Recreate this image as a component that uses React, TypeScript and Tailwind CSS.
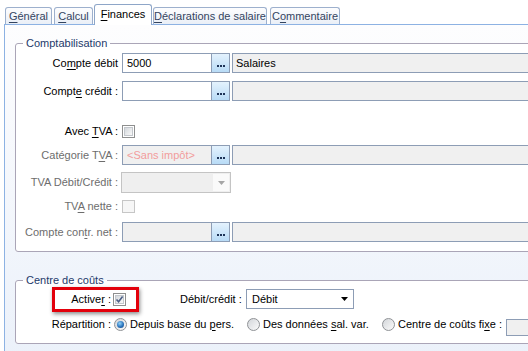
import type { ReactNode } from "react"

function U({ children }: { children: ReactNode }) {
    return <span className="underline underline-offset-[2px]">{children}</span>
}

function Tab({
    children,
    active,
    className = "",
}: {
    children: ReactNode
    active?: boolean
    className?: string
}) {
    return (
        <div
            className={
                active
                    ? `relative z-10 -mb-px flex h-[21px] items-center justify-center rounded-t-[3px] border border-b-0 border-[#8ea6c8] bg-white pb-[2px] text-black ${className}`
                    : `flex h-[17px] items-center justify-center rounded-t-[3px] border border-b-0 border-[#9db0cd] bg-linear-to-b from-[#fdfdfe] to-[#eaeff7] text-[#34445f] ${className}`
            }
        >
            {children}
        </div>
    )
}

function DotsButton() {
    return (
        <span className="flex w-[18px] items-end justify-center gap-px border-l border-[#8d9db5] bg-linear-to-b from-[#e4f2fd] to-[#b8dbf6] pb-[5px]">
            <i className="h-[2px] w-[2px] bg-[#1d3357]" />
            <i className="h-[2px] w-[2px] bg-[#1d3357]" />
            <i className="h-[2px] w-[2px] bg-[#1d3357]" />
        </span>
    )
}

function Lookup({ children, disabled }: { children?: ReactNode; disabled?: boolean }) {
    return (
        <div className="ml-[4px] flex h-[20px] w-[108px] shrink-0 border border-[#8d9db5]">
            <div
                className={`flex flex-1 items-center px-[4px] ${disabled ? "bg-[#f0f0f0]" : "bg-white"}`}
            >
                {children}
            </div>
            <DotsButton />
        </div>
    )
}

function Desc({ children }: { children?: ReactNode }) {
    return (
        <div className="ml-[2px] flex h-[20px] flex-1 items-center border border-[#8d9db5] bg-[#f0f0f0] px-[3px]">
            {children}
        </div>
    )
}

function CheckBox({ checked, disabled, className = "" }: { checked?: boolean; disabled?: boolean; className?: string }) {
    return (
        <span
            className={`flex h-[13px] w-[13px] shrink-0 items-center justify-center border ${disabled ? "border-[#c6c6c6] bg-[#f6f6f6]" : "border-[#8e8f8f] bg-white"} ${className}`}
        >
            <span
                className={`relative h-[9px] w-[9px] ${disabled ? "" : "border border-[#c3c7cc] bg-linear-to-br from-[#d4d8dc] to-[#f9f9f9]"}`}
            >
                {checked && (
                    <svg viewBox="0 0 9 9" className="absolute -left-px -top-px h-[9px] w-[9px]" aria-hidden="true">
                        <path d="M1.5 4.5 L3.6 6.8 L7.6 1.6" fill="none" stroke="#4b5f86" strokeWidth={1.6} />
                    </svg>
                )}
            </span>
        </span>
    )
}

function Radio({ checked }: { checked?: boolean }) {
    return (
        <span className="flex h-[13px] w-[13px] shrink-0 items-center justify-center rounded-full border border-[#8f9296] bg-linear-to-br from-[#d3d6da] to-[#fbfbfb]">
            {checked && (
                <span className="h-[7px] w-[7px] rounded-full bg-[radial-gradient(circle_at_40%_35%,#93d4fb_0%,#2a74bd_55%,#123f7a_100%)]" />
            )}
        </span>
    )
}

function Row({
    label,
    disabled,
    className = "",
    children,
}: {
    label: ReactNode
    disabled?: boolean
    className?: string
    children?: ReactNode
}) {
    return (
        <div className={`flex items-center ${className}`}>
            <span className={`w-[102px] shrink-0 text-right ${disabled ? "text-[#6d6d6d]" : ""}`}>{label}</span>
            {children}
        </div>
    )
}

export default function App() {
    return (
        <div className="h-[351px] w-[528px] overflow-hidden bg-white pl-[4px] font-['Liberation_Sans',Arial,sans-serif] text-[11px] leading-[13px] text-black">
            {/* Tab strip */}
            <div className="flex h-[24px] items-end pl-px">
                <Tab className="w-[47px]">
                    <U>G</U>énéral
                </Tab>
                <Tab className="ml-[2px] w-[39px]">
                    <U>C</U>alcul
                </Tab>
                <Tab active className="ml-px w-[58px]">
                    <U>F</U>inances
                </Tab>
                <Tab className="ml-px w-[114px]">
                    <U>D</U>éclarations de salaire
                </Tab>
                <Tab className="ml-[3px] w-[70px]">
                    C<U>o</U>mmentaire
                </Tab>
            </div>

            {/* Tab page */}
            <div className="h-[340px] w-[580px] border-l border-t border-[#8db2e3] bg-linear-to-b from-[#fdfdfe] to-[#ebf1fa] pl-[10px] pt-[12px]">
                <fieldset className="w-[560px] rounded-[3px] border border-[#aaa5b7] bg-white pb-[9px]">
                    <legend className="ml-[7px] px-[3px] text-[#1e3a6a]">Comptabilisation</legend>

                    <Row className="mt-[3px] h-[20px]" label={<>Co<U>m</U>pte débit</>}>
                        <Lookup>5000</Lookup>
                        <Desc>Salaires</Desc>
                    </Row>

                    <Row className="mt-[8px] h-[20px]" label={<>Compt<U>e</U> crédit :</>}>
                        <Lookup />
                        <Desc />
                    </Row>

                    <Row className="mt-[20px] h-[20px]" label={<>Avec <U>T</U>VA :</>}>
                        <CheckBox className="ml-[4px]" />
                    </Row>

                    <Row className="mt-[4px] h-[20px]" disabled label={<>Catégorie T<U>V</U>A :</>}>
                        <Lookup disabled>
                            <span className="text-[#f29c9c]">&lt;Sans impôt&gt;</span>
                        </Lookup>
                        <Desc />
                    </Row>

                    <Row className="mt-[7px] h-[21px]" disabled label="TVA Débit/Crédit :">
                        <div className="ml-[3px] flex h-[21px] w-[110px] border border-[#c4c4c4] bg-[#efefef]">
                            <span className="flex-1" />
                            <span className="m-px flex w-[16px] items-center justify-center bg-[#fafafa]">
                                <svg viewBox="0 0 7 4" className="h-[4px] w-[7px]" aria-hidden="true">
                                    <path d="M0 0h7L3.5 4z" fill="#a6a6a6" />
                                </svg>
                            </span>
                        </div>
                    </Row>

                    <Row className="mt-[3px] h-[20px]" disabled label={<>TV<U>A</U> nette :</>}>
                        <CheckBox disabled className="ml-[4px]" />
                    </Row>

                    <Row className="mt-[6px] h-[20px]" disabled label={<>Compte con<U>t</U>r. net :</>}>
                        <Lookup disabled />
                        <Desc />
                    </Row>
                </fieldset>

                <fieldset className="mt-[22px] w-[560px] rounded-[3px] border border-[#aaa5b7] bg-white pb-[9px]">
                    <legend className="ml-[7px] px-[3px] text-[#1e3a6a]">Centre de coûts</legend>

                    <div className="relative mt-[2px] flex h-[20px] items-center">
                        <span className="w-[95px] text-right">
                            Active<U>r</U> :
                        </span>
                        <CheckBox checked className="ml-[2px]" />
                        <span className="ml-[54px] w-[66px]">Débit/crédit :</span>
                        <div className="flex h-[20px] w-[108px] items-center justify-between border border-[#8d9db5] bg-white pl-[5px] pr-[5px]">
                            <span>Débit</span>
                            <svg viewBox="0 0 7 4" className="h-[4px] w-[7px]" aria-hidden="true">
                                <path d="M0 0h7L3.5 4z" fill="#000" />
                            </svg>
                        </div>
                        {/* red highlight annotation */}
                        <div className="pointer-events-none absolute left-[36px] top-[-2px] h-[25px] w-[87px] border-[3px] border-[#e3000b] shadow-[1px_2px_4px_rgba(0,0,0,0.45)]" />
                    </div>

                    <div className="mt-[5px] flex h-[20px] items-center">
                        <span className="w-[95px] text-right">Répartition :</span>
                        <div className="ml-[3px] flex w-[133px] items-center">
                            <Radio checked />
                            <span className="ml-[3px]">
                                Depuis base du <U>p</U>ers.
                            </span>
                        </div>
                        <div className="flex w-[135px] items-center">
                            <Radio />
                            <span className="ml-[3px]">
                                Des données <U>s</U>al. var.
                            </span>
                        </div>
                        <div className="flex w-[124px] items-center">
                            <Radio />
                            <span className="ml-[3px]">
                                Centre de coûts fi<U>x</U>e :
                            </span>
                        </div>
                        <div className="mt-[5px] h-[17px] flex-1 self-start border border-[#8d9db5] bg-[#f0f0f0]" />
                    </div>
                </fieldset>
            </div>
        </div>
    )
}
